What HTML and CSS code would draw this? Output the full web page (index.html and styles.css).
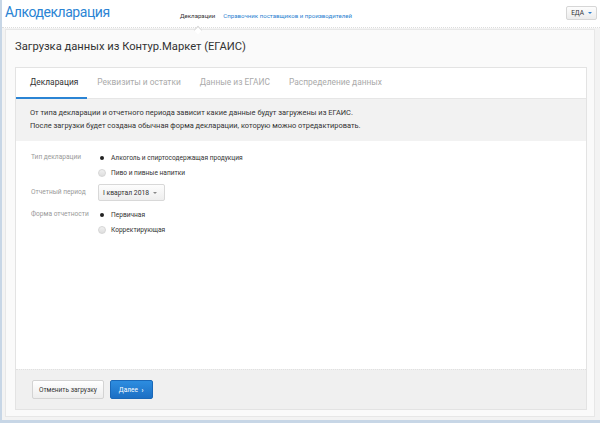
FILE: index.html
```html
<!DOCTYPE html>
<html lang="ru">
<head>
<meta charset="utf-8">
<link rel="stylesheet" href="styles.css">
</head>
<body>
<div class="frame">
  <header class="topbar">
    <div class="logo">Алкодекларация</div>
    <nav class="nav">
      <span class="nav-item active">Декларации</span>
      <span class="nav-item link">Справочник поставщиков и производителей</span>
    </nav>
    <button class="org-btn">ЕДА <span class="caret"></span></button>
  </header>
  <main class="panel">
    <h1 class="title">Загрузка данных из Контур.Маркет (ЕГАИС)</h1>
    <section class="card">
      <div class="tabs">
        <span class="tab active">Декларация</span>
        <span class="tab">Реквизиты и остатки</span>
        <span class="tab">Данные из ЕГАИС</span>
        <span class="tab">Распределение данных</span>
      </div>
      <div class="info">
        <p>От типа декларации и отчетного периода зависит какие данные будут загружены из ЕГАИС.</p>
        <p>После загрузки будет создана обычная форма декларации, которую можно отредактировать.</p>
      </div>
      <div class="form">
        <div class="row">
          <div class="label">Тип декларации</div>
          <div class="options">
            <div class="radio checked"><span class="dot"></span>Алкоголь и спиртосодержащая продукция</div>
            <div class="radio"><span class="dot"></span>Пиво и пивные напитки</div>
          </div>
        </div>
        <div class="row row-select">
          <div class="label">Отчетный период</div>
          <div class="options">
            <div class="select">I квартал 2018 <span class="caret gray"></span></div>
          </div>
        </div>
        <div class="row">
          <div class="label">Форма отчетности</div>
          <div class="options">
            <div class="radio checked"><span class="dot"></span>Первичная</div>
            <div class="radio"><span class="dot"></span>Корректирующая</div>
          </div>
        </div>
      </div>
      <div class="footer">
        <button class="btn">Отменить загрузку</button>
        <button class="btn primary">Далее <span class="chev">›</span></button>
      </div>
    </section>
  </main>
</div>
</body>
</html>
```
FILE: styles.css
```css
* { box-sizing: border-box; }
html, body { margin: 0; padding: 0; }
body {
  font-family: Roboto, "Open Sans", sans-serif;
  color: #333;
  background: #f2f3f4;
  width: 600px;
  height: 423px;
  overflow: hidden;
  white-space: nowrap;
}
.frame {
  width: 600px;
  height: 423px;
  border-left: 2px solid #c7d6e6;
  border-bottom: 3px solid #c7d6e6;
  background: #f3f3f3;
  display: flex;
  flex-direction: column;
}
.topbar {
  height: 28px;
  background: #fff;
  border-bottom: 1px dotted #dcdcdc;
  display: flex;
  align-items: center;
  padding: 0 3px 0 3px;
  position: relative;
}
.logo {
  font-size: 14px;
  color: #2b84d4;
  width: 175px;
  margin-top: -3px;
  letter-spacing: -0.45px;
}
.nav {
  display: flex;
  gap: 8px;
  font-size: 6.1px;
  flex: 1;
  margin-top: 3px;
}
.nav-item { color: #333; position: relative; }
.nav-item.link { color: #2b7fd0; }
.nav-item.active::after {
  content: "";
  position: absolute;
  left: 50%;
  top: 15px;
  width: 5px;
  height: 5px;
  background: #fff;
  border-left: 1px solid #d8d8d8;
  border-top: 1px solid #d8d8d8;
  transform: translateX(-50%) rotate(45deg);
}
.org-btn {
  font-family: inherit;
  font-size: 6.5px;
  color: #333;
  background: linear-gradient(#fdfdfd, #ececec);
  border: 1px solid #d6d6d6;
  border-radius: 2px;
  height: 14px;
  padding: 0 4px 0 4px;
  display: flex;
  align-items: center;
  gap: 4px;
  margin-top: -2px;
}
.caret {
  display: inline-block;
  width: 0; height: 0;
  border-left: 2px solid transparent;
  border-right: 2px solid transparent;
  border-top: 2.5px solid #2b7fd0;
}
.caret.gray { border-top-color: #888; }
.panel {
  flex: 1;
  margin: 1px 5px 3px 3px;
  background: #fafafa;
  border: 1px solid #e7e7e7;
  padding: 0 7px 6px 9px;
  display: flex;
  flex-direction: column;
}
.title {
  font-weight: normal;
  font-size: 11.2px;
  margin: 10px 0 0 0;
  height: 27px;
  color: #333;
}
.card {
  flex: 1;
  background: #fff;
  border: 1px solid #e3e3e3;
  display: flex;
  flex-direction: column;
}
.tabs {
  height: 31px;
  display: flex;
  border-bottom: 1px solid #e6e6e6;
}
.tab {
  font-size: 8.4px;
  color: #aaa;
  padding: 9px 0 0 0;
  margin: 0 9px 0 10px;
}
.tab:first-child { margin-left: 0; }
.tab.active {
  color: #333;
  border-bottom: 2px solid #2b84d4;
  padding: 9px 9px 0 14px;
  margin-right: 0;
  margin-bottom: -1px;
}
.info {
  background: #f2f2f2;
  height: 42px;
  padding: 7px 14px 0;
  font-size: 7.45px;
  color: #333;
}
.info p { margin: 0; line-height: 13px; }
.form {
  flex: 1;
  padding: 9px 15px 0;
  font-size: 6.6px;
}
.row { display: flex; margin-bottom: 5px; }
.label { width: 67px; color: #999; line-height: 15px; }
.options { display: flex; flex-direction: column; }
.radio {
  display: flex;
  align-items: center;
  height: 15px;
  color: #333;
}
.dot {
  width: 8px; height: 8px;
  border-radius: 50%;
  background: linear-gradient(#f0f0f0, #dedede);
  border: 1px solid #d6d6d6;
  margin-right: 5px;
  position: relative;
}
.radio.checked .dot { background: #fff; border-color: #fff; }
.radio.checked .dot::after {
  content: "";
  position: absolute;
  left: 1px; top: 1px;
  width: 4px; height: 4px;
  border-radius: 50%;
  background: #222;
}
.row-select { margin: -1px 0 6px; }
.row-select .label { line-height: 17px; }
.select {
  height: 17px;
  width: 67px;
  border: 1px solid #d8d8d8;
  border-radius: 2px;
  background: linear-gradient(#fdfdfd, #eeeeee);
  display: flex;
  align-items: center;
  justify-content: space-between;
  padding: 0 7px 0 4px;
  font-size: 6.8px;
  color: #333;
}
.footer {
  height: 40px;
  background: #f0f0f0;
  border-top: 1px dotted #e0e0e0;
  display: flex;
  align-items: center;
  gap: 6px;
  padding: 0 0 0 16px;
}
.btn {
  font-family: inherit;
  font-size: 6.5px;
  height: 19px;
  padding: 0 6px;
  border: 1px solid #d3d3d3;
  border-radius: 2px;
  background: linear-gradient(#ffffff, #ededed);
  color: #333;
  white-space: nowrap;
}
.btn.primary {
  background: linear-gradient(#2d8de0, #1c6fc4);
  border-color: #1a68b8;
  color: #fff;
  padding: 0 8px;
  width: 43px;
  text-align: left;
}
.chev { font-weight: bold; margin-left: 2px; }
```
